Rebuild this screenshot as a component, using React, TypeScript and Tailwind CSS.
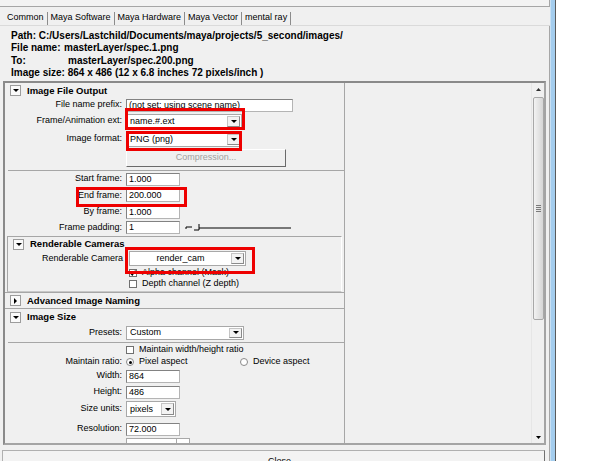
import React from "react";

function DownTri({ w = 7, h = 4 }: { w?: number; h?: number }) {
  return (
    <svg width={w} height={h} viewBox={`0 0 ${w} ${h}`}>
      <path d={`M0 0H${w}L${w / 2} ${h}Z`} fill="#000" />
    </svg>
  );
}

function SectionHeader({ title, open = true, h }: { title: string; open?: boolean; h: string }) {
  return (
    <div className={`flex items-center shrink-0 ${h}`}>
      <div className="ml-[5px] w-[11px] h-[11px] bg-[#fafafa] border border-[#9c9c9c] flex items-center justify-center">
        {open ? (
          <DownTri w={6} h={3} />
        ) : (
          <svg width="3" height="6" viewBox="0 0 3 6">
            <path d="M0 0L3 3L0 6Z" fill="#000" />
          </svg>
        )}
      </div>
      <span className="ml-[6px] text-[9.5px] font-bold text-black">{title}</span>
    </div>
  );
}

function Row({ label, h, children, top }: { label: string; h: string; children?: React.ReactNode; top?: boolean }) {
  return (
    <div className={`flex shrink-0 ${top ? "items-start" : "items-center"} ${h}`}>
      <span className="w-[117px] text-right text-[9px] text-black whitespace-nowrap">{label}</span>
      <div className="ml-[4px] flex items-center">{children}</div>
    </div>
  );
}

function Field({ value, className }: { value: string; className: string }) {
  return (
    <div
      className={`h-[13px] bg-white border border-[#b4b4b4] border-t-[#828282] border-l-[#828282] text-[9px] leading-[11px] pl-[2px] text-black whitespace-nowrap overflow-hidden ${className}`}
    >
      {value}
    </div>
  );
}

function Dropdown({ text, className, center }: { text: string; className: string; center?: boolean }) {
  return (
    <div className={`flex bg-white border border-[#a8a8a8] ${className}`}>
      <span className={`flex-1 text-[9px] text-black leading-none self-center ${center ? "text-center" : "pl-[3px]"}`}>
        {text}
      </span>
      <span className="w-[13px] my-[1px] mr-[1px] bg-[#f3f3f3] border border-[#c4c4c4] border-r-[#8a8a8a] border-b-[#8a8a8a] flex items-center justify-center">
        <DownTri w={6} h={3} />
      </span>
    </div>
  );
}

function Check({ label, checked }: { label: string; checked?: boolean }) {
  return (
    <div className="flex items-center">
      <span className="w-[8px] h-[8px] bg-white border border-[#707070] flex items-center justify-center">
        {checked && (
          <svg width="6" height="6" viewBox="0 0 6 6">
            <path d="M0.5 3L2.3 5L5.5 0.5" stroke="#000" strokeWidth="1.2" fill="none" />
          </svg>
        )}
      </span>
      <span className="ml-[5px] text-[9px] text-black whitespace-nowrap">{label}</span>
    </div>
  );
}

function Radio({ label, on }: { label: string; on?: boolean }) {
  return (
    <div className="flex items-center">
      <span className="w-[8px] h-[8px] rounded-full bg-white border border-[#8a8a8a] flex items-center justify-center">
        {on && <span className="w-[3px] h-[3px] rounded-full bg-black" />}
      </span>
      <span className="ml-[5px] text-[9px] text-black whitespace-nowrap">{label}</span>
    </div>
  );
}

const tabs = ["Common", "Maya Software", "Maya Hardware", "Maya Vector", "mental ray"];

export default function App() {
  return (
    <div className="relative w-[600px] h-[461px] bg-white flex overflow-hidden font-['Liberation_Sans',Arial,sans-serif]">
      {/* window body */}
      <div className="w-[550px] h-full bg-[#f0f0f0] flex flex-col overflow-hidden">
        <div className="h-[7px] shrink-0 bg-[#f3f3f3] border-b border-r border-[#a6a6a6]" />

        {/* tabs */}
        <div className="h-[19px] shrink-0 flex items-center pt-[4px] pl-[7px] border-b border-[#dadada] text-[9px] text-black">
          {tabs.map((t) => (
            <div key={t} className="flex items-center">
              <span>{t}</span>
              <span className="mx-[3px] w-px h-[13px] bg-[#8c8c8c]" />
            </div>
          ))}
        </div>

        <div className="flex-1 flex flex-col border-r border-[#a6a6a6]">
          {/* info */}
          <div className="shrink-0 pt-[4px] pl-[11px] text-[10px] font-bold leading-[12.3px] text-black whitespace-nowrap">
            <div>Path: C:/Users/Lastchild/Documents/maya/projects/5_second/images/</div>
            <div className="flex">
              <span className="w-[53px]">File name:</span>
              <span>masterLayer/spec.1.png</span>
            </div>
            <div className="flex">
              <span className="w-[57px]">To:</span>
              <span>masterLayer/spec.200.png</span>
            </div>
            <div>Image size: 864 x 486 (12 x 6.8 inches 72 pixels/inch )</div>
          </div>

          {/* scroll area */}
          <div className="mt-[2px] ml-[3px] w-[543px] h-[364px] shrink-0 flex border-2 border-[#a4a4a4] border-t-[#8a8a8a] border-l-[#8a8a8a] overflow-hidden">
            <div className="w-[340px] shrink-0 border-r border-[#a6a6a6]">
              <SectionHeader title="Image File Output" h="h-[15px]" />
              <Row label="File name prefix:" h="h-[14px]">
                <Field value="(not set; using scene name)" className="w-[167px]" />
              </Row>
              <Row label="Frame/Animation ext:" h="h-[18px]">
                <Dropdown text="name.#.ext" className="w-[116px] h-[15px]" />
              </Row>
              <Row label="Image format:" h="h-[18px]">
                <Dropdown text="PNG (png)" className="w-[116px] h-[15px]" />
              </Row>
              <Row label="" h="h-[19px]" top>
                <div className="mt-[1px] w-[160px] h-[18px] bg-[#f0f0f0] border border-white border-r-[#6a6a6a] border-b-[#6a6a6a] flex items-center justify-center text-[9px] text-[#a0a0a0]">
                  Compression...
                </div>
              </Row>
              <div className="h-[3px]" />
              <div className="h-px bg-[#a6a6a6] ml-[3px]" />
              <Row label="Start frame:" h="h-[16px]">
                <Field value="1.000" className="w-[54px]" />
              </Row>
              <Row label="End frame:" h="h-[17px]">
                <Field value="200.000" className="w-[54px]" />
              </Row>
              <Row label="By frame:" h="h-[16px]">
                <Field value="1.000" className="w-[54px]" />
              </Row>
              <Row label="Frame padding:" h="h-[15px]">
                <Field value="1" className="w-[54px]" />
                <svg width="106" height="10" viewBox="0 0 106 10" className="ml-[5px]">
                  <path d="M1 4H7M1 4V6" stroke="#000" strokeWidth="1" fill="none" />
                  <path d="M14 1V7M9 7H14" stroke="#000" strokeWidth="1" fill="none" />
                  <path d="M14 5H106" stroke="#000" strokeWidth="1" />
                </svg>
              </Row>
              <div className="h-px" />

              {/* renderable cameras */}
              <div className="ml-[2px] mr-[2px] border border-[#a6a6a6] border-r-white border-b-[#c8c8c8]">
                <SectionHeader title="Renderable Cameras" h="h-[14px]" />
                <div className="flex items-start h-[16px]">
                  <span className="w-[115px] text-right text-[9px] text-black pt-[1px]">Renderable Camera</span>
                  <div className="ml-[6px]">
                    <Dropdown text="render_cam" className="w-[117px] h-[15px]" center />
                  </div>
                </div>
                <div className="h-[11px] flex items-center pl-[121px]">
                  <Check label="Alpha channel (Mask)" checked />
                </div>
                <div className="h-[12px] flex items-center pl-[121px]">
                  <Check label="Depth channel (Z depth)" />
                </div>
                <div className="h-px" />
              </div>

              <div className="border-t border-[#a6a6a6]">
                <SectionHeader title="Advanced Image Naming" open={false} h="h-[15px]" />
              </div>
              <div className="border-t border-[#a6a6a6]">
                <SectionHeader title="Image Size" h="h-[16px]" />
              </div>
              <Row label="Presets:" h="h-[15px]">
                <Dropdown text="Custom" className="w-[118px] h-[14px]" />
              </Row>
              <div className="h-[2px]" />
              <div className="h-px bg-[#a6a6a6] ml-[3px]" />
              <div className="h-[13px] flex items-center pl-[121px]">
                <Check label="Maintain width/height ratio" />
              </div>
              <Row label="Maintain ratio:" h="h-[12px]">
                <div className="w-[114px]">
                  <Radio label="Pixel aspect" on />
                </div>
                <Radio label="Device aspect" />
              </Row>
              <Row label="Width:" h="h-[16px]">
                <Field value="864" className="w-[54px]" />
              </Row>
              <Row label="Height:" h="h-[16px]">
                <Field value="486" className="w-[54px]" />
              </Row>
              <Row label="Size units:" h="h-[18px]">
                <Dropdown text="pixels" className="w-[50px] h-[16px]" />
              </Row>
              <div className="h-[3px]" />
              <Row label="Resolution:" h="h-[16px]">
                <Field value="72.000" className="w-[54px]" />
              </Row>
              <Row label="" h="h-[16px]" top>
                <div className="mt-[1px] w-[64px] h-[14px] bg-white border border-[#a8a8a8] flex justify-end">
                  <span className="w-[13px] border-l border-[#a8a8a8]" />
                </div>
              </Row>
            </div>

            <div className="flex-1" />

            {/* scrollbar */}
            <div className="w-[13px] shrink-0 flex flex-col items-center bg-[#f0f0f0] border-l border-[#e6e6e6]">
              <div className="h-[13px] shrink-0 flex items-center justify-center">
                <svg width="5" height="3" viewBox="0 0 5 3">
                  <path d="M0 3H5L2.5 0Z" fill="#303030" />
                </svg>
              </div>
              <div className="mt-[1px] shrink-0 w-[11px] h-[223px] rounded-[2px] border border-[#a8a8a8] bg-gradient-to-r from-[#f2f2f2] to-[#d6d6d6] flex flex-col items-center justify-center gap-[1px]">
                <span className="w-[5px] h-px bg-[#7a7a7a]" />
                <span className="w-[5px] h-px bg-[#7a7a7a]" />
                <span className="w-[5px] h-px bg-[#7a7a7a]" />
                <span className="w-[5px] h-px bg-[#7a7a7a]" />
              </div>
              <div className="flex-1" />
              <div className="h-[12px] shrink-0 flex items-center justify-center">
                <DownTri w={5} h={3} />
              </div>
            </div>
          </div>

          {/* close */}
          <div className="mt-[5px] ml-[2px] w-[543px] h-[24px] shrink-0 bg-[#f3f3f3] border border-[#b0b0b0] border-r-[#707070] flex items-center justify-center pl-[12px] text-[9px] text-black">
            Close
          </div>
        </div>
      </div>

      {/* window frame edge */}
      <div className="w-[5px] h-full bg-[#a4cdee] border-l border-[#c8e0f4]" />
      <div className="w-px h-full bg-[#5a5a5a]" />
      <div className="flex-1 h-full bg-white" />

      {/* red annotation boxes */}
      <div className="absolute left-[125px] top-[108px] w-[120px] h-[22px] border-[3px] border-[#ee0000]" />
      <div className="absolute left-[126px] top-[131px] w-[116px] h-[20px] border-[3px] border-[#ee0000]" />
      <div className="absolute left-[76px] top-[187px] w-[111px] h-[20px] border-[3px] border-[#ee0000]" />
      <div className="absolute left-[125px] top-[247px] w-[130px] h-[27px] border-[3px] border-[#ee0000]" />
    </div>
  );
}
